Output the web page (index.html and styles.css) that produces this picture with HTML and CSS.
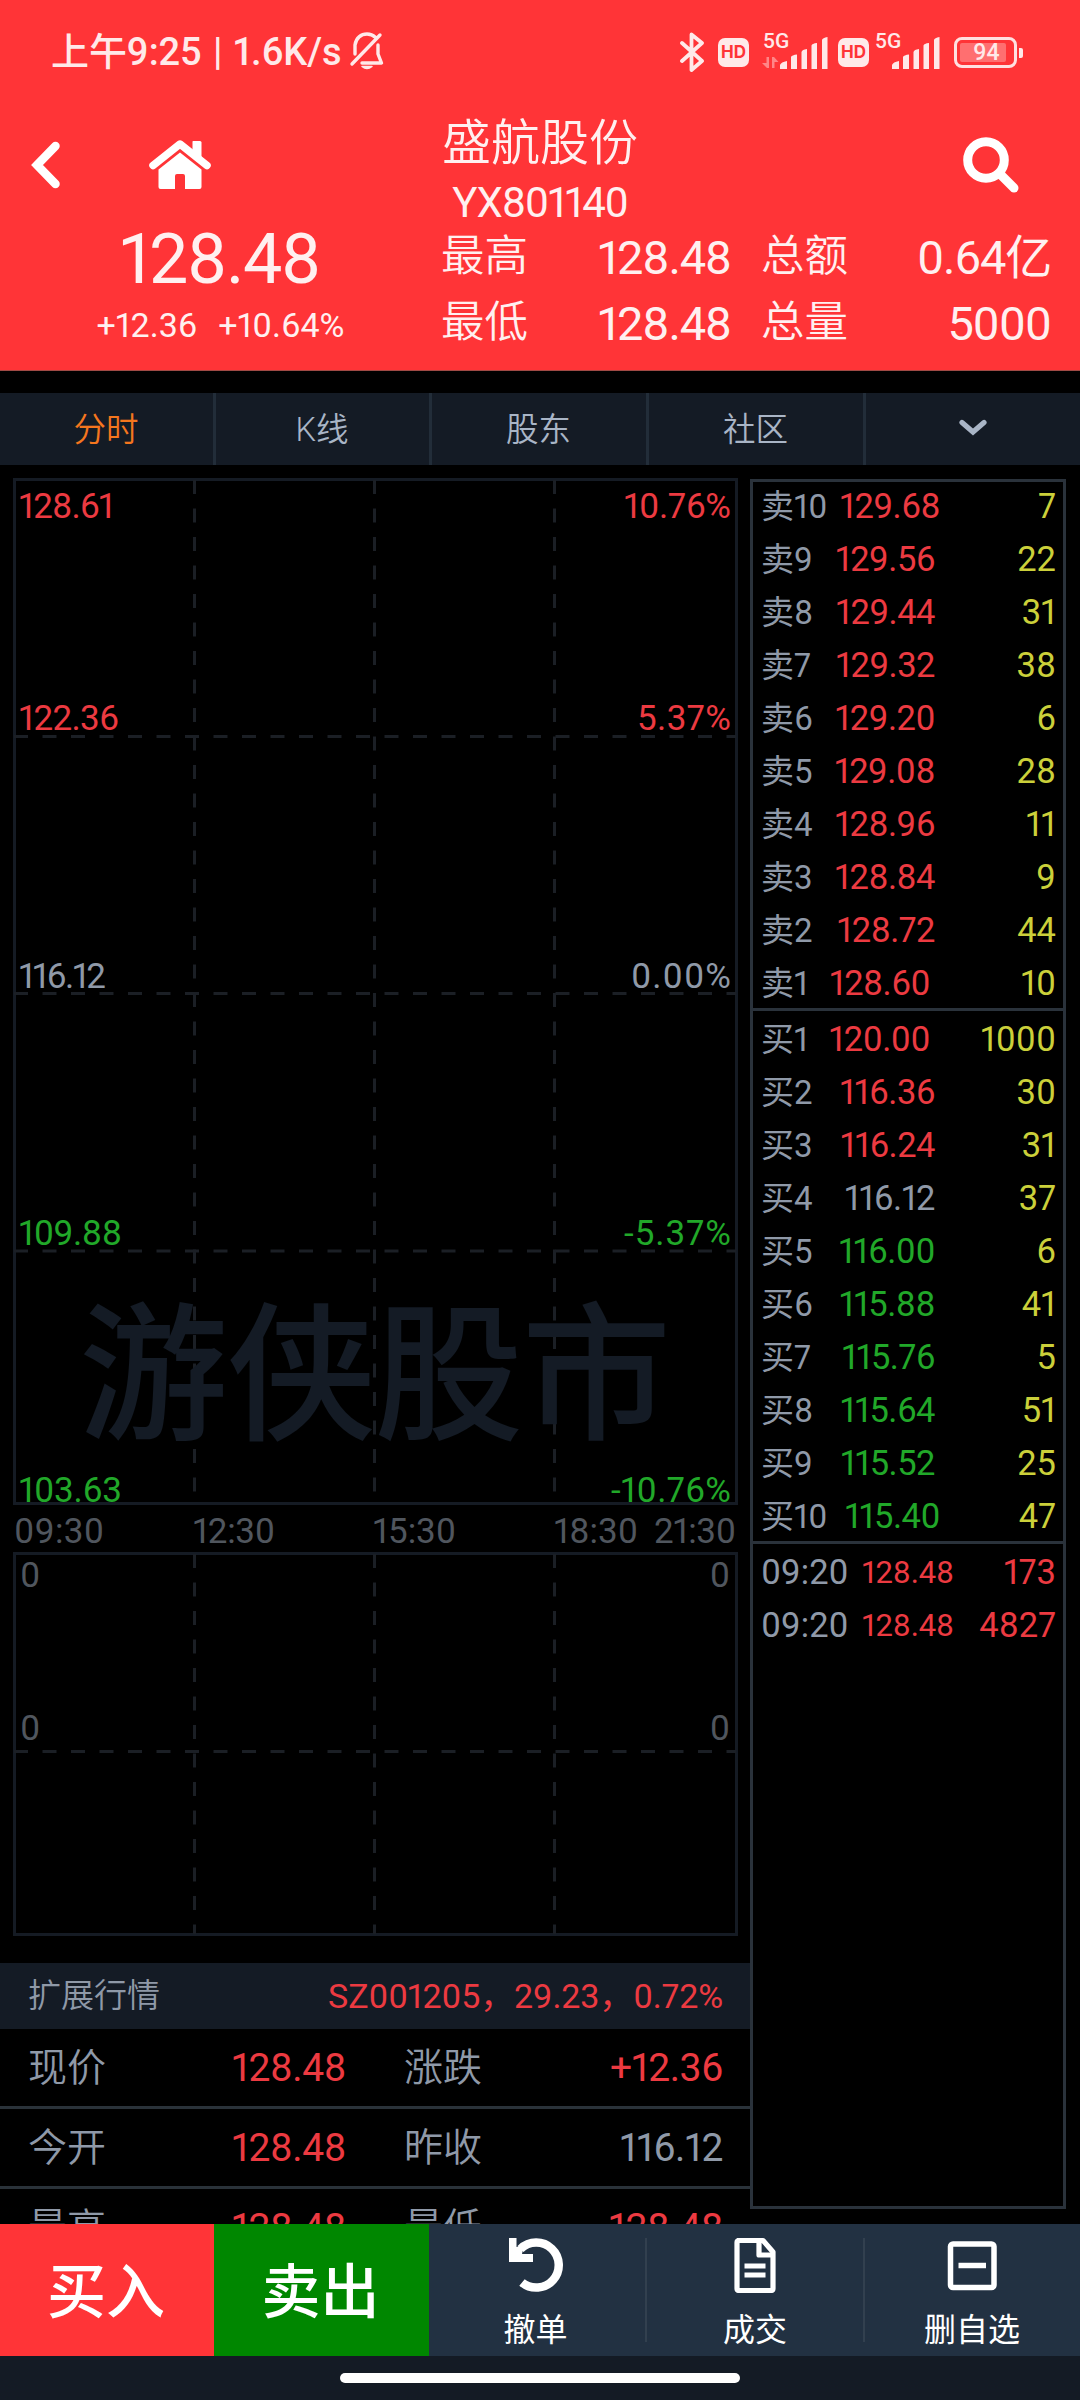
FILE: index.html
```html
<!DOCTYPE html>
<html lang="zh-CN">
<head>
<meta charset="utf-8">
<title>盛航股份</title>
<link rel="stylesheet" href="styles.css">
</head>
<body>
<header class="head">
  <div class="status">
    <span class="clock">上午9:25 | 1.6K/s</span>
    <svg class="bell" width="36" height="40" viewBox="0 0 36 40" fill="none" stroke="currentColor" stroke-width="3.400" stroke-linecap="round" stroke-linejoin="round"><path d="M6 22V13C7 6 12 2 18 2Q23 2 26 5M29 13V22L32.500 31H13M3 32L31 3"/><path d="M13 34.500H23Q18 38.500 13 34.500Z" fill="currentColor" stroke-width="1.500"/></svg>
    <div class="signals">
      <svg width="26" height="40" viewBox="0 0 26 40" fill="none" stroke="currentColor" stroke-width="3.800" stroke-linejoin="round" stroke-linecap="round"><path d="M3 11L23 29L12.500 38V2.500L23 11L3 29"/></svg>
      <span class="hd">HD</span>
      <div class="net net-first"><span class="gen">5G</span><svg width="66" height="35" viewBox="0 0 66 35" fill="currentColor"><path opacity=".45" d="M4.500 23H7V34H5L0 29H4.500ZM10 34V23H12L16.500 28H12.500V34Z"/><path d="M18 35V31Q19 28 25 27V35ZM29 35V23Q30 21 35 20.500V35ZM39.500 35V18Q40 15.500 45 15V35ZM49.500 35V11.500Q50 9.500 55 9V35ZM60 35V6Q60.500 4 65.500 3V35Z"/></svg></div>
      <span class="hd">HD</span>
      <div class="net"><span class="gen">5G</span><svg width="66" height="35" viewBox="0 0 66 35" fill="currentColor"><path d="M18 35V31Q19 28 25 27V35ZM29 35V23Q30 21 35 20.500V35ZM39.500 35V18Q40 15.500 45 15V35ZM49.500 35V11.500Q50 9.500 55 9V35ZM60 35V6Q60.500 4 65.500 3V35Z"/></svg></div>
      <span class="battery"><span class="charge">94</span></span>
    </div>
  </div>
  <div class="summary">
    <div class="left">
      <div class="nav">
        <svg width="30" height="48" viewBox="0 0 30 48" fill="none" stroke="#fff" stroke-width="8.500" stroke-linecap="round" stroke-linejoin="miter"><path d="M24.500 5L6 24L24.500 43"/></svg>
        <svg width="62" height="49" viewBox="0 0 62 49" fill="#fff"><path d="M44 1H51Q52.500 1 52.500 2.500V20L43.500 13V1.500Z"/><path d="M4 25.500L31 4L58 25.500" fill="none" stroke="#fff" stroke-width="7.500" stroke-linecap="round" stroke-linejoin="round"/><path d="M31 12.500L52.500 29.500V47Q52.500 49 50.500 49H36V36Q36 34 34 34H28Q26 34 26 36V49H11.500Q9.500 49 9.500 47V29.500Z"/></svg>
      </div>
      <div class="last">128.48</div>
      <div class="change"><span>+12.36</span><span>+10.64%</span></div>
    </div>
    <div class="right">
      <div class="title">
        <div><h1>盛航股份</h1><p>YX801140</p></div>
        <svg width="56" height="56" viewBox="0 0 56 56" fill="none" stroke="#fff"><circle cx="23" cy="23" r="18.300" stroke-width="9"/><path d="M37 37L51 51" stroke-width="9" stroke-linecap="round"/></svg>
      </div>
      <div class="stats">
        <div><b>最高</b><span>128.48</span></div><div><b>总额</b><span>0.64亿</span></div>
        <div><b>最低</b><span>128.48</span></div><div><b>总量</b><span>5000</span></div>
      </div>
    </div>
  </div>
</header>
<nav class="tabs">
  <a class="on">分时</a><a>K线</a><a>股东</a><a>社区</a>
  <a><svg width="30" height="20" viewBox="0 0 30 20" fill="none" stroke="#a9b5c6" stroke-width="5.200" stroke-linecap="round" stroke-linejoin="miter"><path d="M4 4.500L15 14L26 4.500"/></svg></a>
</nav>
<main class="main">
  <div class="col">
    <svg class="chart" width="750" height="1498" viewBox="0 465 750 1498">
      <g class="frame"><rect x="14.500" y="479.500" width="722" height="1024"/><rect x="14.500" y="1553.500" width="722" height="381"/></g>
      <g class="dash">
        <path d="M194.500 480V1503M374.500 480V1503M554.500 480V1503"/>
        <path d="M194.500 1554V1934M374.500 1554V1934M554.500 1554V1934"/>
        <path d="M14 736.500H736M14 993.500H736M14 1251H736M14 1751.500H736"/>
      </g>
      <text class="mark" x="79" y="1428" textLength="592">游侠股市</text>
      <g class="lab">
        <text class="up" x="19" y="518" textLength="95">128.61</text><text class="up end" x="731" y="518" textLength="107">10.76%</text>
        <text class="up" x="19" y="730" textLength="100">122.36</text><text class="up end" x="731" y="730" textLength="94">5.37%</text>
        <text x="19" y="988" textLength="87">116.12</text><text class="end" x="731" y="988" textLength="100">0.00%</text>
        <text class="down" x="19" y="1245" textLength="103">109.88</text><text class="down end" x="731" y="1245" textLength="107">-5.37%</text>
        <text class="down" x="19" y="1502" textLength="103">103.63</text><text class="down end" x="731" y="1502" textLength="120">-10.76%</text>
      </g>
      <g class="axis">
        <text x="14" y="1543" textLength="90">09:30</text><text x="193" y="1543" textLength="82">12:30</text><text x="373" y="1543" textLength="83">15:30</text><text x="554" y="1543" textLength="84">18:30</text><text x="654" y="1543" textLength="82">21:30</text>
        <text x="20" y="1587">0</text><text class="end" x="730" y="1587">0</text>
        <text x="20" y="1740">0</text><text class="end" x="730" y="1740">0</text>
      </g>
    </svg>
    <div class="ext"><span>扩展行情</span><span class="up">SZ001205，29.23，0.72%</span></div>
    <div class="row"><span>现价</span><span class="up">128.48</span><span>涨跌</span><span class="up">+12.36</span></div>
    <div class="row"><span>今开</span><span class="up">128.48</span><span>昨收</span><span>116.12</span></div>
    <div class="row"><span>最高</span><span class="up">128.48</span><span>最低</span><span class="up">128.48</span></div>
  </div>
  <aside class="book">
    <div class="asks">
      <div class="lv wide"><span>卖10</span><span class="up">129.68</span><span>7</span></div>
      <div class="lv"><span>卖9</span><span class="up">129.56</span><span>22</span></div>
      <div class="lv"><span>卖8</span><span class="up">129.44</span><span>31</span></div>
      <div class="lv"><span>卖7</span><span class="up">129.32</span><span>38</span></div>
      <div class="lv"><span>卖6</span><span class="up">129.20</span><span>6</span></div>
      <div class="lv"><span>卖5</span><span class="up">129.08</span><span>28</span></div>
      <div class="lv"><span>卖4</span><span class="up">128.96</span><span>11</span></div>
      <div class="lv"><span>卖3</span><span class="up">128.84</span><span>9</span></div>
      <div class="lv"><span>卖2</span><span class="up">128.72</span><span>44</span></div>
      <div class="lv slim"><span>卖1</span><span class="up">128.60</span><span>10</span></div>
    </div>
    <div class="bids">
      <div class="lv slim"><span>买1</span><span class="up">120.00</span><span>1000</span></div>
      <div class="lv"><span>买2</span><span class="up">116.36</span><span>30</span></div>
      <div class="lv"><span>买3</span><span class="up">116.24</span><span>31</span></div>
      <div class="lv"><span>买4</span><span>116.12</span><span>37</span></div>
      <div class="lv"><span>买5</span><span class="down">116.00</span><span>6</span></div>
      <div class="lv"><span>买6</span><span class="down">115.88</span><span>41</span></div>
      <div class="lv"><span>买7</span><span class="down">115.76</span><span>5</span></div>
      <div class="lv"><span>买8</span><span class="down">115.64</span><span>51</span></div>
      <div class="lv"><span>买9</span><span class="down">115.52</span><span>25</span></div>
      <div class="lv wide"><span>买10</span><span class="down">115.40</span><span>47</span></div>
    </div>
    <div class="ticks">
      <div class="lv"><span>09:20</span><span class="up">128.48</span><span class="up">173</span></div>
      <div class="lv"><span>09:20</span><span class="up">128.48</span><span class="up">4827</span></div>
    </div>
  </aside>
</main>
<footer class="actions">
  <button class="buy">买入</button>
  <button class="sell">卖出</button>
  <button class="act"><svg width="56" height="56" viewBox="0 0 56 56"><path d="M12.500 12A22.500 22.500 0 1 1 14 45.500" fill="none" stroke="#fff" stroke-width="8.500"/><path fill="#fff" d="M1 1H8.500V10L16 8L14 17H25V25H1Z"/></svg><span>撤单</span></button>
  <button class="act"><svg width="56" height="56" viewBox="0 0 56 56" fill="none" stroke="#fff" stroke-width="5.200" stroke-linejoin="round"><path d="M10 3.500H36L46 15V51.500Q46 53.500 44 53.500H12Q10 53.500 10 51.500V5.500Q10 3.500 12 3.500"/><path d="M32 4V18H46M17.500 29H38.500M17.500 38H38.500"/></svg><span>成交</span></button>
  <button class="act"><svg width="56" height="56" viewBox="0 0 56 56" fill="none" stroke="#fff" stroke-width="5.500"><rect x="6.500" y="7" width="43.500" height="43.500" rx="2.500"/><path d="M14.500 28.500H42"/></svg><span>删自选</span></button>
</footer>
<div class="home"><i></i></div>
</body>
</html>
```
FILE: styles.css
```css
* { box-sizing: border-box; margin: 0; padding: 0; }
body {
  width: 1080px; height: 2400px; overflow: hidden;
  background: #000; color: #8f99a8;
  font-family: Roboto, "Noto Sans CJK SC", sans-serif;
  font-weight: 400; font-feature-settings: "pnum";
  white-space: nowrap;
}
svg { display: block; flex: none; }
button { border: 0; font: inherit; font-feature-settings: inherit; color: #fff; }
.up { color: #ec3a41; }
.down { color: #21a829; }

.head { height: 371px; background: #ff3437; color: #fff0f0; border-bottom: 1px solid #a04a45; }
.status { display: flex; align-items: center; height: 104px; padding: 0 57px 0 51px; color: #ffe9e9; }
.clock { font-size: 38px; line-height: 46px; font-weight: 500; word-spacing: 2px; letter-spacing: -.1px; }
.bell { margin-left: 8px; }
.signals { display: flex; align-items: center; margin-left: auto; }
.hd { width: 31px; height: 29px; margin-left: 13px; border-radius: 7px; background: #ffe9e9; color: #ff3437; font: 700 17px/29px Inter, sans-serif; text-align: center; }
.net { position: relative; margin-left: 5px; }
.net-first { margin: 0 -3px 0 13px; }
.gen { position: absolute; left: 1px; top: -7px; font-size: 21px; line-height: 24px; font-weight: 500; }
.net svg { margin-top: -2px; }
.battery { position: relative; display: flex; width: 63px; height: 31px; margin: 0 6px 0 14px; padding: 3px; border: 3px solid #ffe0e0; border-radius: 8px; }
.battery::after { content: ""; position: absolute; right: -9px; top: 8px; width: 4px; height: 10px; border-radius: 0 2px 2px 0; background: #ffe9e9; }
.charge { width: 46px; padding-left: 7px; border-radius: 2px; background: #ff6f70; font-size: 23px; line-height: 20px; font-weight: 500; text-align: center; }

.summary { display: grid; grid-template-columns: 440px 1fr; }
.nav { display: flex; align-items: center; gap: 88px; height: 121px; padding-left: 31px; }
.last { font-size: 70px; line-height: 68px; letter-spacing: -1.500px; text-align: center; }
.change { display: flex; justify-content: center; gap: 21px; padding-left: 1px; font-size: 34px; line-height: 64px; }
.title { display: flex; justify-content: space-between; align-items: center; height: 121px; padding-right: 61px; }
.title > div { width: 200px; text-align: center; }
h1 { padding-top: 3px; font-size: 49px; line-height: 73px; font-weight: 350; }
.title p { font-size: 42px; line-height: 45px; letter-spacing: -1.200px; }
.stats { display: grid; grid-template-columns: 291px 291px; column-gap: 29px; font-size: 47px; line-height: 66px; letter-spacing: -1.200px; }
.stats div { display: flex; justify-content: space-between; }
.stats b { padding: 0 0 3px 1px; font-size: 43.500px; line-height: 63px; font-weight: 350; letter-spacing: 0; }

.tabs { display: grid; grid-template-columns: 216px 216px 217px 217px 214px; height: 72px; margin-top: 22px; background: #141b25; color: #a9b5c6; }
.tabs a { display: flex; align-items: center; justify-content: center; padding: 0 1px 5px 0; border-right: 3px solid #222d39; font-size: 32.500px; font-weight: 350; }
.tabs a:last-child { border: 0; padding: 0 0 2px; }
.tabs .on { color: #f5761e; }

.main { display: flex; height: 1759px; overflow: hidden; }
.col { width: 750px; }
.chart { font-feature-settings: "pnum"; }
.frame rect { fill: none; stroke: #151b24; stroke-width: 3; }
.dash path { stroke: #1b1f25; stroke-width: 3; stroke-dasharray: 14 14.500; }
.mark { font-size: 149px; font-weight: 500; fill: #141b25; }
.lab text { font-size: 35px; fill: #8f99a8; }
.lab .up { fill: #ec3a41; }
.lab .down { fill: #21a829; }
.chart .end { text-anchor: end; }
.axis text { font-size: 35px; fill: #50565e; }
.ext { display: flex; justify-content: space-between; height: 66px; padding: 0 27px 0 28px; background: #141b25; font-size: 33px; line-height: 66px; }
.ext span:first-child { font-weight: 350; }
.ext .up { font-size: 34px; letter-spacing: -.1px; }
.row { display: grid; grid-template-columns: 160px 158px 117px 1fr; height: 80px; padding: 1px 27px 0 28px; border-bottom: 3px solid #2a3239; font-size: 39px; line-height: 77px; }
.row span:nth-child(even) { text-align: right; letter-spacing: -.4px; }
.row span:nth-child(odd) { font-weight: 350; }
.row span:nth-child(3) { padding-left: 58px; }

.book { width: 316px; height: 1730px; margin-top: 14px; border: 3px solid #2a323b; }
.lv { display: grid; grid-template-columns: 60px 114px 1fr; height: 53px; padding: 0 7px 0 8px; font-size: 34.500px; line-height: 53px; }
.lv.wide { grid-template-columns: 60px 119px 1fr; }
.lv.slim { grid-template-columns: 60px 109px 1fr; }
.lv span { text-align: right; }
.lv span:first-child { text-align: left; font-size: 33px; }
.lv span:nth-child(2) { letter-spacing: -.5px; }
.lv span:last-child { color: #cbd03a; }
.asks { height: 529px; padding-top: 1px; border-bottom: 3px solid #2a323b; }
.asks .lv:first-child { height: 50px; line-height: 47px; }
.bids { height: 533px; padding-top: 2px; border-bottom: 3px solid #2a323b; }
.ticks { padding-top: 2px; }
.ticks .lv { grid-template-columns: 90px 103px 1fr; }
.ticks .lv span:first-child { font-size: 34.500px; }
.ticks .lv span:nth-child(2) { font-size: 31px; letter-spacing: -.1px; }
.ticks .lv span:last-child { color: #ec3a41; }

.actions { display: grid; grid-template-columns: 214px 215px 217px 218px 216px; height: 132px; background: #223142; }
.buy, .sell { padding: 0 2px 6px 0; font-size: 59px; font-weight: 500; }
.buy { background: #ff3437; }
.sell { background: #008700; }
.act { position: relative; display: flex; flex-direction: column; align-items: center; padding-top: 13px; background: none; font-size: 32px; line-height: 46px; }
.act:nth-child(3) { padding-right: 4px; }
.act span { margin-top: 14px; }
.act + .act::before { content: ""; position: absolute; left: -1px; top: 14px; width: 2px; height: 104px; background: #32404f; }
.home { display: flex; justify-content: center; height: 44px; padding-top: 17px; background: #141b25; }
.home i { width: 400px; height: 10px; border-radius: 5px; background: #fff; }
```
